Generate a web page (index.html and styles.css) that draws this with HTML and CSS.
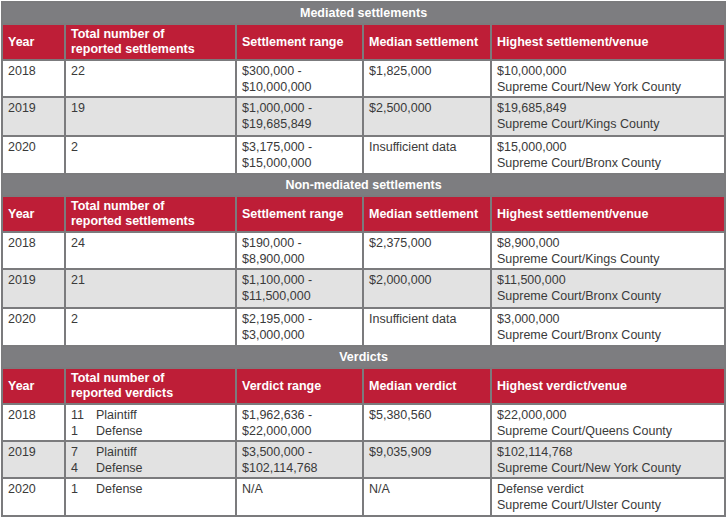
FILE: index.html
```html
<!DOCTYPE html>
<html>
<head>
<meta charset="utf-8">
<link rel="stylesheet" href="styles.css">
</head>
<body>
<table class="data">
  <colgroup>
    <col class="c1"><col class="c2"><col class="c3"><col class="c4"><col class="c5">
  </colgroup>
  <tr class="section"><th colspan="5">Mediated settlements</th></tr>
  <tr class="head"><th>Year</th><th>Total number of<br>reported settlements</th><th>Settlement range</th><th>Median settlement</th><th>Highest settlement/venue</th></tr>
  <tr class="r1"><td>2018</td><td>22</td><td>$300,000 -<br>$10,000,000</td><td>$1,825,000</td><td>$10,000,000<br>Supreme Court/New York County</td></tr>
  <tr class="r2 alt"><td>2019</td><td>19</td><td>$1,000,000 -<br>$19,685,849</td><td>$2,500,000</td><td>$19,685,849<br>Supreme Court/Kings County</td></tr>
  <tr class="r3"><td>2020</td><td>2</td><td>$3,175,000 -<br>$15,000,000</td><td>Insufficient data</td><td>$15,000,000<br>Supreme Court/Bronx County</td></tr>

  <tr class="section"><th colspan="5">Non-mediated settlements</th></tr>
  <tr class="head"><th>Year</th><th>Total number of<br>reported settlements</th><th>Settlement range</th><th>Median settlement</th><th>Highest settlement/venue</th></tr>
  <tr class="r1"><td>2018</td><td>24</td><td>$190,000 -<br>$8,900,000</td><td>$2,375,000</td><td>$8,900,000<br>Supreme Court/Kings County</td></tr>
  <tr class="r2 alt"><td>2019</td><td>21</td><td>$1,100,000 -<br>$11,500,000</td><td>$2,000,000</td><td>$11,500,000<br>Supreme Court/Bronx County</td></tr>
  <tr class="r3"><td>2020</td><td>2</td><td>$2,195,000 -<br>$3,000,000</td><td>Insufficient data</td><td>$3,000,000<br>Supreme Court/Bronx County</td></tr>

  <tr class="section"><th colspan="5">Verdicts</th></tr>
  <tr class="head"><th>Year</th><th>Total number of<br>reported verdicts</th><th>Verdict range</th><th>Median verdict</th><th>Highest verdict/venue</th></tr>
  <tr class="r1"><td>2018</td><td><span class="n">11</span>Plaintiff<br><span class="n">1</span>Defense</td><td>$1,962,636 -<br>$22,000,000</td><td>$5,380,560</td><td>$22,000,000<br>Supreme Court/Queens County</td></tr>
  <tr class="r1 alt"><td>2019</td><td><span class="n">7</span>Plaintiff<br><span class="n">4</span>Defense</td><td>$3,500,000 -<br>$102,114,768</td><td>$9,035,909</td><td>$102,114,768<br>Supreme Court/New York County</td></tr>
  <tr class="r3"><td>2020</td><td><span class="n">1</span>Defense</td><td>N/A</td><td>N/A</td><td>Defense verdict<br>Supreme Court/Ulster County</td></tr>
</table>
</body>
</html>
```
FILE: styles.css
```css
html, body {
  margin: 0;
  padding: 0;
  background: #ffffff;
}
body {
  padding: 1px 0 0 1px;
}
.data {
  border-collapse: collapse;
  table-layout: fixed;
  width: 723px;
  font-family: "Liberation Sans", Arial, sans-serif;
  font-size: 12.5px;
  color: #3a3a3a;
}
.c1 { width: 63px; }
.c2 { width: 171px; }
.c3 { width: 127px; }
.c4 { width: 128px; }
.c5 { width: 234px; }
.data th, .data td {
  border: 2px solid #7b7b7d;
  padding: 0 5px;
  text-align: left;
}
.data td {
  vertical-align: top;
  line-height: 16px;
  padding-top: 2px;
}
.section th {
  background: #7d7d80;
  color: #ffffff;
  text-align: center;
  font-weight: bold;
  font-size: 12.5px;
  padding-top: 2px;
  padding-bottom: 1px;
  line-height: 17px;
}
.head th {
  background: #be1e37;
  color: #ffffff;
  font-weight: bold;
  font-size: 12.5px;
  line-height: 15px;
  padding-top: 2px;
  padding-bottom: 2px;
  vertical-align: middle;
}
.alt td {
  background: #e2e2e2;
}
.r1 td { padding-bottom: 1px; }
.r2 td { padding-bottom: 3px; }
.r3 td { padding-bottom: 2px; }
.n {
  display: inline-block;
  width: 25px;
}
```
